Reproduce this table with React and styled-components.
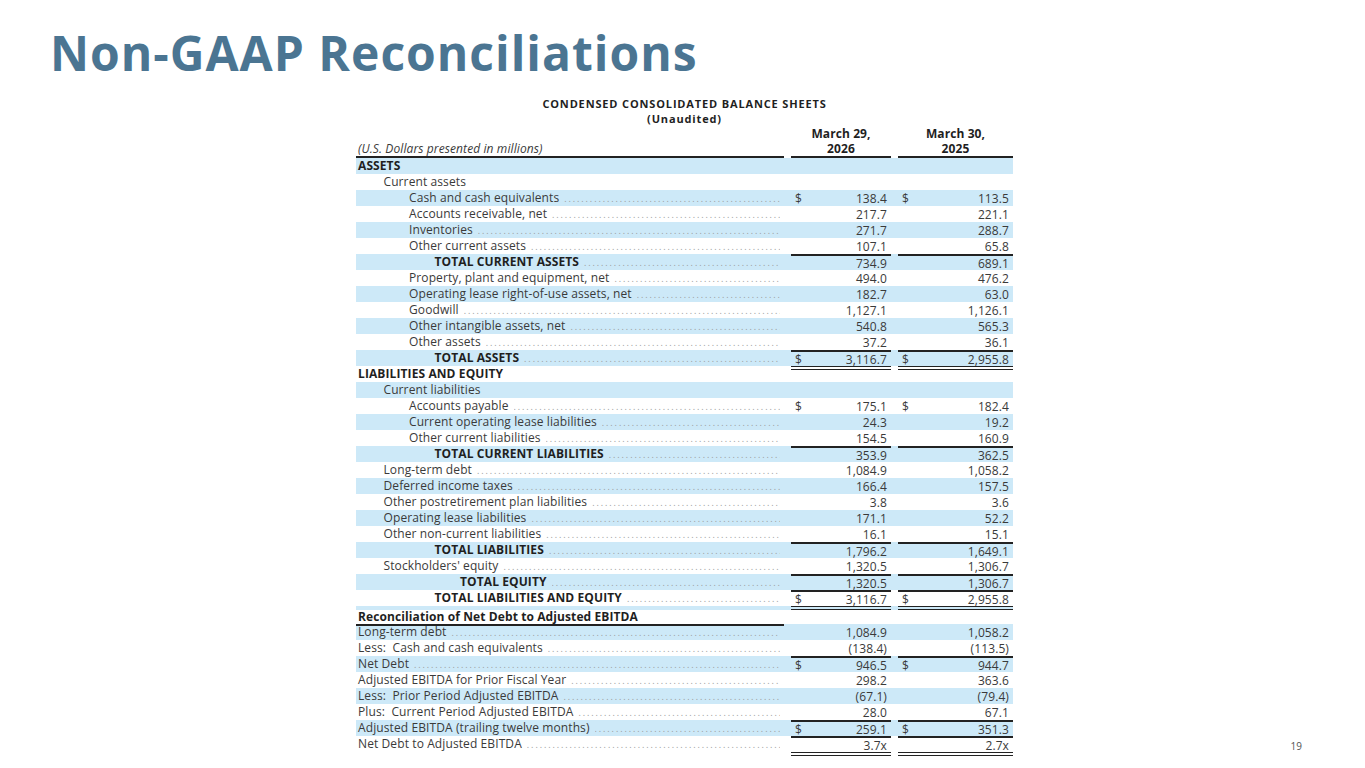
import React from 'react';
import styled, { createGlobalStyle } from 'styled-components';

const Global = createGlobalStyle`
  html, body { margin: 0; padding: 0; background: #ffffff; }
  body { font-family: "Open Sans", "Liberation Sans", sans-serif; }
`;

const Slide = styled.div`
  width: 1365px;
  height: 768px;
  box-sizing: border-box;
  padding: 29px 0 0 50px;
  display: flex;
  flex-direction: column;
  overflow: hidden;
`;

const Title = styled.h1`
  margin: 0;
  font-size: 48px;
  line-height: 47px;
  font-weight: 700;
  color: #4b7592;
  letter-spacing: 1px;
`;

const Body = styled.div`
  display: flex;
  align-items: flex-end;
  margin-top: 20px;
`;

const Table = styled.div`
  margin-left: 306px;
  width: 657px;
  font-size: 12px;
  letter-spacing: 0.1px;
  color: #3a3a3a;
`;

const Caption = styled.div`
  text-align: center;
  font-weight: 700;
  font-size: 11px;
  line-height: 15px;
  letter-spacing: 0.85px;
  color: #1f1f1f;
`;

const Row = styled.div`
  display: grid;
  grid-template-columns: 428px 100px 115px;
  column-gap: 7px;
  height: ${(p) => p.$h || 16}px;
  background: ${(p) => (p.$blue ? '#cde9f8' : 'transparent')};
`;

const Label = styled.div`
  display: flex;
  align-items: baseline;
  box-sizing: border-box;
  min-width: 0;
  padding-left: ${(p) => 2 + (p.$level || 0) * 25.5}px;
  padding-right: 4px;
  line-height: ${(p) => (p.$rule ? 14 : 16)}px;
  font-weight: ${(p) => (p.$bold ? 700 : 400)};
  font-style: ${(p) => (p.$italic ? 'italic' : 'normal')};
  color: ${(p) => (p.$bold ? '#1f1f1f' : '#3a3a3a')};
  white-space: pre;
  border-bottom: ${(p) => (p.$rule ? '2px solid #222' : '0')};
`;

const Leader = styled.span`
  flex: 1;
  overflow: hidden;
  white-space: nowrap;
  margin-left: 5px;
  font-size: 9px;
  letter-spacing: 1.9px;
  color: #9a9a9a;
  font-weight: 400;
  &::after {
    content: "${'.'.repeat(160)}";
  }
`;

const Value = styled.div`
  position: relative;
  display: flex;
  align-items: center;
  justify-content: ${(p) => (p.$center ? 'center' : 'space-between')};
  box-sizing: border-box;
  padding: 0 4px;
  line-height: 14px;
  font-weight: ${(p) => (p.$bold ? 700 : 400)};
  color: ${(p) => (p.$bold ? '#1f1f1f' : '#3a3a3a')};
  border-top: ${(p) => (p.$top ? '2px solid #222' : '0')};
  border-bottom: ${(p) => (p.$rule ? '2px solid #222' : '0')};
  &::after {
    content: '';
    display: ${(p) => (p.$double ? 'block' : 'none')};
    position: absolute;
    left: 0;
    right: 0;
    bottom: -3px;
    height: 2px;
    border-top: 1px solid #222;
    border-bottom: 1px solid #222;
  }
`;

const Num = styled.span`
  margin-left: auto;
`;

const PageNum = styled.div`
  margin-left: auto;
  margin-right: 63px;
  font-size: 10px;
  line-height: 12px;
  color: #555;
`;

const rows = [
  { label: 'ASSETS', level: 0, bold: true, head: true },
  { label: 'Current assets', level: 1, head: true },
  { label: 'Cash and cash equivalents', level: 2, v: ['138.4', '113.5'], dollar: true },
  { label: 'Accounts receivable, net', level: 2, v: ['217.7', '221.1'] },
  { label: 'Inventories', level: 2, v: ['271.7', '288.7'] },
  { label: 'Other current assets', level: 2, v: ['107.1', '65.8'] },
  { label: 'TOTAL CURRENT ASSETS', level: 3, bold: true, v: ['734.9', '689.1'], top: true },
  { label: 'Property, plant and equipment, net', level: 2, v: ['494.0', '476.2'] },
  { label: 'Operating lease right-of-use assets, net', level: 2, v: ['182.7', '63.0'] },
  { label: 'Goodwill', level: 2, v: ['1,127.1', '1,126.1'] },
  { label: 'Other intangible assets, net', level: 2, v: ['540.8', '565.3'] },
  { label: 'Other assets', level: 2, v: ['37.2', '36.1'] },
  { label: 'TOTAL ASSETS', level: 3, bold: true, v: ['3,116.7', '2,955.8'], dollar: true, top: true, double: true },
  { label: 'LIABILITIES AND EQUITY', level: 0, bold: true, head: true },
  { label: 'Current liabilities', level: 1, head: true },
  { label: 'Accounts payable', level: 2, v: ['175.1', '182.4'], dollar: true },
  { label: 'Current operating lease liabilities', level: 2, v: ['24.3', '19.2'] },
  { label: 'Other current liabilities', level: 2, v: ['154.5', '160.9'] },
  { label: 'TOTAL CURRENT LIABILITIES', level: 3, bold: true, v: ['353.9', '362.5'], top: true },
  { label: 'Long-term debt', level: 1, v: ['1,084.9', '1,058.2'] },
  { label: 'Deferred income taxes', level: 1, v: ['166.4', '157.5'] },
  { label: 'Other postretirement plan liabilities', level: 1, v: ['3.8', '3.6'] },
  { label: 'Operating lease liabilities', level: 1, v: ['171.1', '52.2'] },
  { label: 'Other non-current liabilities', level: 1, v: ['16.1', '15.1'] },
  { label: 'TOTAL LIABILITIES', level: 3, bold: true, v: ['1,796.2', '1,649.1'], top: true },
  { label: "Stockholders' equity", level: 1, v: ['1,320.5', '1,306.7'] },
  { label: 'TOTAL EQUITY', level: 4, bold: true, v: ['1,320.5', '1,306.7'], top: true },
  { label: 'TOTAL LIABILITIES AND EQUITY', level: 3, bold: true, v: ['3,116.7', '2,955.8'], dollar: true, top: true, double: true },
  { spacer: true },
  { label: 'Reconciliation of Net Debt to Adjusted EBITDA', level: 0, bold: true, head: true, rule: true, h: 14 },
  { label: 'Long-term debt', level: 0, v: ['1,084.9', '1,058.2'] },
  { label: 'Less:  Cash and cash equivalents', level: 0, v: ['(138.4)', '(113.5)'] },
  { label: 'Net Debt', level: 0, v: ['946.5', '944.7'], dollar: true, top: true },
  { label: 'Adjusted EBITDA for Prior Fiscal Year', level: 0, v: ['298.2', '363.6'] },
  { label: 'Less:  Prior Period Adjusted EBITDA', level: 0, v: ['(67.1)', '(79.4)'] },
  { label: 'Plus:  Current Period Adjusted EBITDA', level: 0, v: ['28.0', '67.1'] },
  { label: 'Adjusted EBITDA (trailing twelve months)', level: 0, v: ['259.1', '351.3'], dollar: true, top: true },
  { label: 'Net Debt to Adjusted EBITDA', level: 0, v: ['3.7x', '2.7x'], top: true, double: true },
];

function DataRow({ r, blue }) {
  if (r.spacer) {
    return <Row $blue={blue} $h={4} />;
  }
  return (
    <Row $blue={blue} $h={r.h}>
      <Label $level={r.level} $bold={r.bold} $rule={r.rule}>
        <span>{r.label}</span>
        {!r.head && <Leader />}
      </Label>
      {r.v ? (
        r.v.map((n, i) => (
          <Value key={i} $top={r.top} $double={r.double}>
            {r.dollar && <span>$</span>}
            <Num>{n}</Num>
          </Value>
        ))
      ) : (
        <>
          <Value />
          <Value />
        </>
      )}
    </Row>
  );
}

export default function App() {
  return (
    <>
      <Global />
      <Slide>
        <Title>Non-GAAP Reconciliations</Title>
        <Body>
          <Table>
            <Caption>CONDENSED CONSOLIDATED BALANCE SHEETS</Caption>
            <Caption>(Unaudited)</Caption>
            <Row>
              <Label />
              <Value $center $bold>March 29,</Value>
              <Value $center $bold>March 30,</Value>
            </Row>
            <Row>
              <Label $italic $rule>(U.S. Dollars presented in millions)</Label>
              <Value $center $bold $rule>2026</Value>
              <Value $center $bold $rule>2025</Value>
            </Row>
            {rows.map((r, i) => (
              <DataRow key={i} r={r} blue={i % 2 === 0} />
            ))}
          </Table>
          <PageNum>19</PageNum>
        </Body>
      </Slide>
    </>
  );
}
